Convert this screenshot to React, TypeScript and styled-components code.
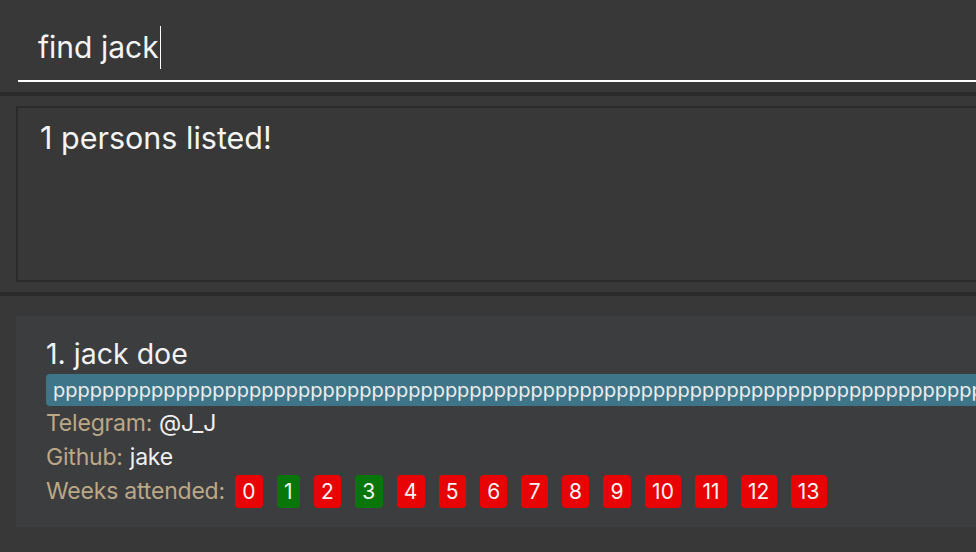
import React from 'react';
import styled, {createGlobalStyle} from 'styled-components';

const GlobalStyle = createGlobalStyle`
  html, body {
    margin: 0;
    padding: 0;
    background: #383838;
    overflow: hidden;
  }
  body {
    font-family: Inter, "Noto Sans", "Liberation Sans", sans-serif;
    color: #f0f0f0;
  }
`;

const Page = styled.div`
  display: flex;
  flex-direction: column;
  width: 976px;
  height: 552px;
  background: #383838;
`;

const CommandBox = styled.div`
  padding: 29px 0 0 18px;
`;

const CommandInput = styled.div`
  display: flex;
  align-items: center;
  height: 36px;
  padding: 0 0 15px 20px;
  border-bottom: 2px solid #ffffff;
  font-size: 30px;
  color: #f4f4f4;
  white-space: nowrap;
`;

const Caret = styled.span`
  display: inline-block;
  width: 1.5px;
  height: 43px;
  margin-left: 1px;
  background: #ffffff;
`;

const Separator = styled.div`
  height: 4px;
  margin-top: 10px;
  background: #2b2b2b;
`;

const ResultSection = styled.div`
  padding: 10px 0 0 16px;
`;

const ResultBox = styled.div`
  box-sizing: border-box;
  height: 176px;
  padding: 12px 0 0 22px;
  border: 2px solid #2a2a2a;
  border-right: none;
  font-size: 30.5px;
  line-height: 36px;
  color: #f4f4f4;
`;

const ListSection = styled.div`
  padding: 20px 0 0 16px;
`;

const Card = styled.div`
  display: flex;
  flex-direction: column;
  padding: 22px 0 19px 30px;
  background: #3c3d3f;
  overflow: hidden;
`;

const Name = styled.div`
  font-size: 28.5px;
  line-height: 32px;
  color: #f2f2f2;
  margin-bottom: 4px;
`;

const TagBar = styled.div`
  height: 32px;
  line-height: 32px;
  padding-left: 7px;
  border-radius: 4px 0 0 4px;
  background: #3e7589;
  font-size: 20px;
  color: #ececec;
  white-space: nowrap;
  overflow: hidden;
`;

const InfoRow = styled.div`
  display: flex;
  align-items: center;
  height: 34px;
  font-size: 23px;
  letter-spacing: -0.2px;
  white-space: nowrap;
`;

const Label = styled.span`
  color: #bca887;
  margin-right: 7px;
`;

const Value = styled.span`
  color: #f0f0f0;
`;

const Weeks = styled.div`
  display: flex;
  gap: 14px;
  margin-left: 3px;
`;

const Week = styled.span<{attended: boolean}>`
  display: flex;
  align-items: center;
  justify-content: center;
  height: 33px;
  padding: 0 7.25px;
  border-radius: 4px;
  background: ${p => (p.attended ? '#087608' : '#e80404')};
  color: #f4f4f4;
  font-size: 21px;
  letter-spacing: 0;
`;

const attended = [1, 3];
const weeks = Array.from({length: 14}, (_, i) => i);

export default function App() {
    return (
        <Page>
            <GlobalStyle/>
            <CommandBox>
                <CommandInput>
                    find jack<Caret/>
                </CommandInput>
            </CommandBox>
            <Separator/>
            <ResultSection>
                <ResultBox>1 persons listed!</ResultBox>
            </ResultSection>
            <Separator/>
            <ListSection>
                <Card>
                    <Name>1. jack doe</Name>
                    <TagBar>{'p'.repeat(110)}</TagBar>
                    <InfoRow>
                        <Label>Telegram:</Label>
                        <Value>@J_J</Value>
                    </InfoRow>
                    <InfoRow>
                        <Label>Github:</Label>
                        <Value>jake</Value>
                    </InfoRow>
                    <InfoRow>
                        <Label>Weeks attended:</Label>
                        <Weeks>
                            {weeks.map(w => (
                                <Week key={w} attended={attended.includes(w)}>{w}</Week>
                            ))}
                        </Weeks>
                    </InfoRow>
                </Card>
            </ListSection>
        </Page>
    );
}
